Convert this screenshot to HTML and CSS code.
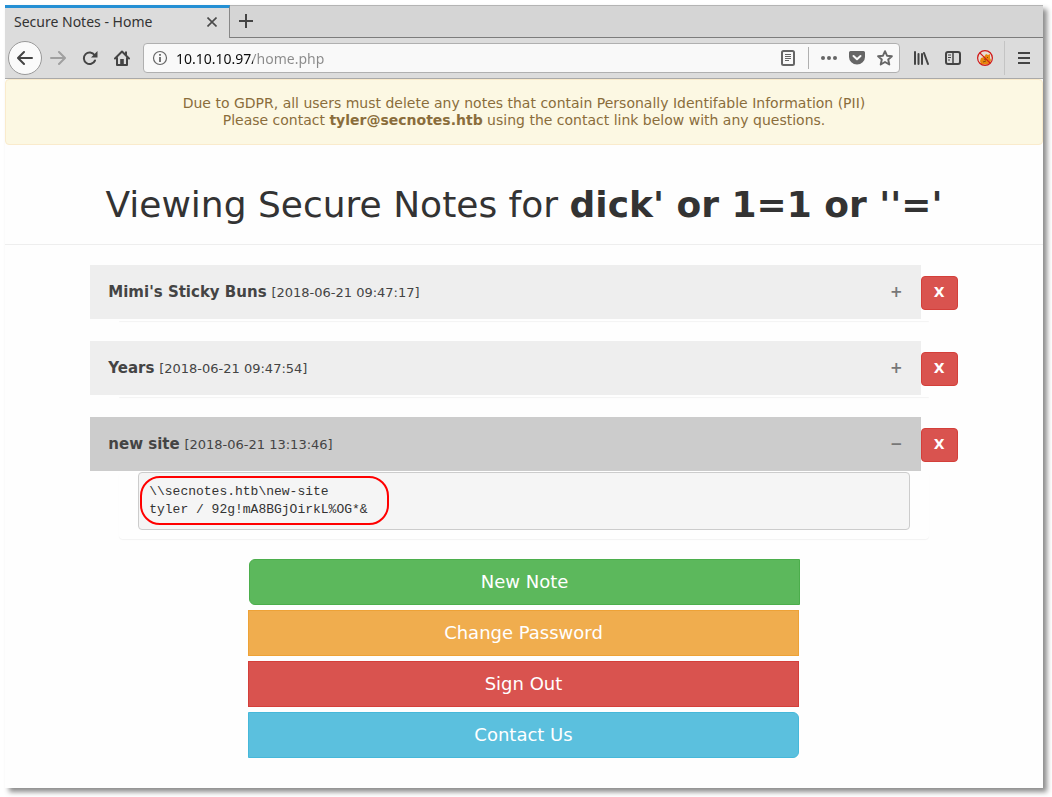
FILE: index.html
```html
<!DOCTYPE html>
<html lang="en">
<head>
<meta charset="utf-8">
<title>Secure Notes - Home</title>
<link rel="stylesheet" href="styles.css">
</head>
<body>
<div class="window">
  <header class="chrome">
    <div class="tabs">
      <div class="tab">
        <span>Secure Notes - Home</span>
        <button class="tab-close" type="button" aria-label="Close tab"><svg width="10" height="10" viewBox="0 0 10 10"><path d="M0.500 0.500l9 9M9.500 0.500l-9 9" stroke="#4a4a4a" stroke-width="1.600" fill="none"/></svg></button>
      </div>
      <button class="tab-new" type="button" aria-label="New tab"><svg width="14" height="14" viewBox="0 0 14 14"><path d="M7 0v14M0 7h14" stroke="#444" stroke-width="2" fill="none"/></svg></button>
    </div>
    <nav class="toolbar">
      <button class="tool back" type="button" aria-label="Back"><svg width="16" height="16" viewBox="0 0 16 16" fill="none" stroke="#444" stroke-width="2" stroke-linecap="round" stroke-linejoin="round"><path d="M15 8H1.500M7 2L1 8l6 6"/></svg></button>
      <button class="tool" type="button" aria-label="Forward"><svg width="16" height="16" viewBox="0 0 16 16" fill="none" stroke="#a0a0a0" stroke-width="2" stroke-linecap="round" stroke-linejoin="round"><path d="M1 8h13.500M9 2l6 6-6 6"/></svg></button>
      <button class="tool" type="button" aria-label="Reload"><svg width="16" height="16" viewBox="0 0 16 16"><path d="M12.500 5A5.800 5.800 0 1 0 13 10.500" fill="none" stroke="#444" stroke-width="2" stroke-linecap="round"/><path d="M15.500 1v6.500H9z" fill="#444"/></svg></button>
      <button class="tool" type="button" aria-label="Home"><svg width="16" height="16" viewBox="0 0 16 16"><path d="M1 8.500L8 1.500l7 7M3 8v7h10V8" fill="none" stroke="#444" stroke-width="2" stroke-linecap="round" stroke-linejoin="round"/><path d="M6.200 15V9h3.600v6z" fill="#444"/><path d="M11 1.500h2V5h-2z" fill="#444"/></svg></button>
      <div class="urlbar">
        <svg width="16" height="16" viewBox="0 0 16 16"><circle cx="8" cy="8" r="6.500" fill="none" stroke="#666" stroke-width="1.200"/><path d="M7.100 7h1.800v5H7.100zM7.100 4h1.800v1.800H7.100z" fill="#666"/></svg>
        <input class="address" type="text" aria-label="Address" value="10.10.10.97/home.php">
        <button class="page-tool" type="button" aria-label="Reader view"><svg width="16" height="16" viewBox="0 0 16 16"><rect x="2" y="1" width="12" height="14" rx="1.500" fill="none" stroke="#666" stroke-width="2"/><path d="M5 4.500h6M5 6.500h6M5 8.500h6M5 10.500h4" stroke="#666"/></svg></button>
        <span class="divider"></span>
        <button class="page-tool" type="button" aria-label="Page actions"><svg width="16" height="16" viewBox="0 0 16 16" fill="#666"><circle cx="2" cy="8" r="2"/><circle cx="8" cy="8" r="2"/><circle cx="14" cy="8" r="2"/></svg></button>
        <button class="page-tool" type="button" aria-label="Save to Pocket"><svg width="16" height="16" viewBox="0 0 16 16"><path d="M1.500 1h13A1.500 1.500 0 0 1 16 2.500V7A8 7.500 0 0 1 0 7V2.500A1.500 1.500 0 0 1 1.500 1z" fill="#666"/><path d="M4.500 6L8 9.300 11.500 6" fill="none" stroke="#f9f9f9" stroke-width="2" stroke-linecap="round" stroke-linejoin="round"/></svg></button>
        <button class="page-tool" type="button" aria-label="Bookmark"><svg width="16" height="16" viewBox="0 0 16 16"><path d="M8 1.200l2 4.500 4.900.5-3.700 3.300 1.100 5L8 12l-4.300 2.500 1.100-5L1.100 6.200 6 5.700z" fill="none" stroke="#666" stroke-width="1.900" stroke-linejoin="round"/></svg></button>
      </div>
      <button class="tool" type="button" aria-label="Library"><svg width="16" height="16" viewBox="0 0 16 16" fill="none" stroke="#444" stroke-width="2" stroke-linecap="round"><path d="M2 2v12M5.500 4v10M9 4v10M11 3l4 11"/></svg></button>
      <button class="tool" type="button" aria-label="Sidebars"><svg width="16" height="16" viewBox="0 0 16 16" fill="none" stroke="#444"><rect x="1" y="2" width="14" height="12" rx="2" stroke-width="2"/><path d="M8 2v12" stroke-width="1.500"/><path d="M3 5h3M3 7.500h3M3 10h2"/></svg></button>
      <button class="tool" type="button" aria-label="Proxy disabled"><svg width="16" height="16" viewBox="0 0 16 16"><circle cx="8" cy="8" r="7" fill="#e8dcd4"/><path d="M3 11l1-3 3-1 2-3 2 1 2-1v4l1 2-1 3-3 1.500H6L4 14z" fill="#e8860c"/><path d="M7 9l2 1M10 7l1 1M6 12l3-1" stroke="#8a4b10"/><circle cx="8" cy="8" r="7.400" fill="none" stroke="#d01818" stroke-width="1.200"/><path d="M2.800 2.800l10.400 10.400" stroke="#d01818" stroke-width="1.200"/></svg></button>
      <span class="tool-divider"></span>
      <button class="tool" type="button" aria-label="Menu"><svg width="16" height="16" viewBox="0 0 16 16"><path d="M2 3h12M2 8h12M2 13h12" stroke="#444" stroke-width="2"/></svg></button>
    </nav>
  </header>

  <div class="alert" role="alert">
    Due to GDPR, all users must delete any notes that contain Personally Identifable Information (PII)<br>
    Please contact <strong>tyler@secnotes.htb</strong> using the contact link below with any questions.
  </div>

  <main>
    <h1>Viewing Secure Notes for <b>dick' or 1=1 or ''='</b></h1>

    <section class="note">
      <div class="note-row">
        <button class="accordion" type="button" aria-expanded="false"><span><b>Mimi's Sticky Buns</b> <small>[2018-06-21 09:47:17]</small></span><span class="sign">+</span></button>
        <button class="delete" type="button">X</button>
      </div>
      <div class="panel"></div>
    </section>
    <section class="note">
      <div class="note-row">
        <button class="accordion" type="button" aria-expanded="false"><span><b>Years</b> <small>[2018-06-21 09:47:54]</small></span><span class="sign">+</span></button>
        <button class="delete" type="button">X</button>
      </div>
      <div class="panel"></div>
    </section>
    <section class="note">
      <div class="note-row">
        <button class="accordion active" type="button" aria-expanded="true"><span><b>new site</b> <small>[2018-06-21 13:13:46]</small></span><span class="sign">−</span></button>
        <button class="delete" type="button">X</button>
      </div>
      <div class="panel open">
        <pre>\\secnotes.htb\new-site
tyler / 92g!mA8BGjOirkL%OG*&amp;<span class="highlight"></span></pre>
      </div>
    </section>

    <div class="actions">
      <a class="btn success" href="#">New Note</a>
      <a class="btn warning" href="#">Change Password</a>
      <a class="btn danger" href="#">Sign Out</a>
      <a class="btn info" href="#">Contact Us</a>
    </div>
  </main>
</div>
</body>
</html>
```
FILE: styles.css
```css
* { box-sizing: border-box; }

body {
  margin: 0;
  padding: 5px 9px 9px 5px;
  background: #fff;
  color: #333;
  font: 14px/17px "DejaVu Sans", sans-serif;
}

button, input { font: inherit; }

button {
  border: 0;
  padding: 0;
  background: none;
  color: inherit;
}

svg { display: block; }

.window {
  min-height: calc(100vh - 14px);
  background: #fefefe;
  box-shadow: 4px 4px 5px rgba(0, 0, 0, 0.45);
}

/* Browser chrome */
.chrome {
  background: #dcdcdc;
  font-family: "Noto Sans", sans-serif;
}

.tabs {
  display: flex;
  height: 33px;
}

.tab {
  display: flex;
  align-items: center;
  justify-content: space-between;
  width: 225px;
  padding: 0 12px 3px 9px;
  border-top: 3px solid #2590d4;
  border-right: 1px solid #888;
  color: #333;
}

.tab-new {
  display: flex;
  flex: 1;
  align-items: center;
  padding-left: 9px;
  border-top: 1px solid #b4b4b4;
  border-bottom: 1px solid #7c7c7c;
  background: #d5d5d5;
}

.tab-new svg { margin-bottom: 2px; }

.toolbar {
  display: flex;
  align-items: center;
  height: 41px;
  padding: 0 3px;
  border-bottom: 1px solid #a9a9a9;
}

.tool {
  display: grid;
  place-items: center;
  flex: 0 0 32px;
  height: 32px;
}

.back {
  flex-basis: 34px;
  height: 34px;
  border: 1px solid #999;
  border-radius: 50%;
  background: #fafafa;
}

.urlbar {
  display: flex;
  flex: 1;
  align-items: center;
  height: 30px;
  margin: 0 5px;
  padding: 0 0 0 8px;
  border: 1px solid #b0b0b0;
  border-radius: 4px;
  background: #f9f9f9;
}

.address {
  flex: 1;
  min-width: 0;
  height: 24px;
  padding: 0;
  margin-left: 8px;
  border: 0;
  outline: 0;
  background: linear-gradient(90deg, #0c0c0c 77px, #8a8a8a 77px);
  background-clip: text;
  -webkit-background-clip: text;
  color: transparent;
}

.page-tool {
  display: grid;
  place-items: center;
  width: 28px;
  height: 26px;
}

.divider {
  width: 1px;
  height: 22px;
  margin: 0 6px;
  background: #b0b0b0;
}

.tool-divider {
  width: 1px;
  height: 34px;
  margin: 0 3px;
  background: #c4c4c4;
}

/* Page content */
.alert {
  padding: 15px;
  border: 1px solid #faebcc;
  border-radius: 4px;
  background: #fcf8e3;
  color: #8a6d3b;
  text-align: center;
}

h1 {
  margin: 40px 0 20px;
  padding-bottom: 19px;
  border-bottom: 1px solid #eee;
  font-size: 36px;
  font-weight: 400;
  line-height: 40px;
  text-align: center;
}

.note { margin-bottom: 20px; }

.note-row {
  display: flex;
  align-items: flex-start;
  justify-content: center;
  height: 55px;
}

.accordion {
  display: flex;
  align-items: center;
  justify-content: space-between;
  width: 80%;
  height: 54px;
  padding: 0 18px;
  background: #eee;
  color: #444;
  font-size: 15px;
  text-align: left;
}

.accordion.active { background: #ccc; }

.accordion small { font-size: 13px; }

.sign {
  color: #777;
  font-size: 15px;
  font-weight: 700;
}

.delete {
  width: 37px;
  height: 34px;
  margin-top: 11px;
  padding-bottom: 2px;
  border: 1px solid #d43f3a;
  border-radius: 4px;
  background: #d9534f;
  color: #fff;
  font-weight: 700;
}

.panel {
  width: 78%;
  min-height: 1px;
  margin: 0 auto;
  padding: 0 19px;
  border-radius: 4px;
  background: #fefefe;
  box-shadow: 0 1px 1px rgba(0, 0, 0, 0.05);
}

.panel.open { padding-bottom: 9px; }

pre {
  position: relative;
  margin: 0;
  padding: 10px;
  border: 1px solid #ccc;
  border-radius: 4px;
  background: #f5f5f5;
  font: 13px/18px "Liberation Mono", monospace;
}

.highlight {
  position: absolute;
  top: 3px;
  left: 1px;
  width: 249px;
  height: 49px;
  border: 2px solid #f00;
  border-radius: 20px;
}

.actions {
  display: grid;
  gap: 5px;
  max-width: 552px;
  margin: 0 auto;
  padding-bottom: 30px;
}

.btn {
  margin-right: 1px;
  padding: 10px 16px;
  border: 1px solid;
  color: #fff;
  font-size: 18px;
  line-height: 24px;
  text-align: center;
  text-decoration: none;
}

.success {
  margin: 0 0 0 1px;
  border-color: #4cae4c;
  border-radius: 6px 0 0 6px;
  background: #5cb85c;
}

.warning { border-color: #eea236; background: #f0ad4e; }

.danger { border-color: #d43f3a; background: #d9534f; }

.info {
  border-color: #46b8da;
  border-radius: 0 6px 6px 0;
  background: #5bc0de;
}
```
